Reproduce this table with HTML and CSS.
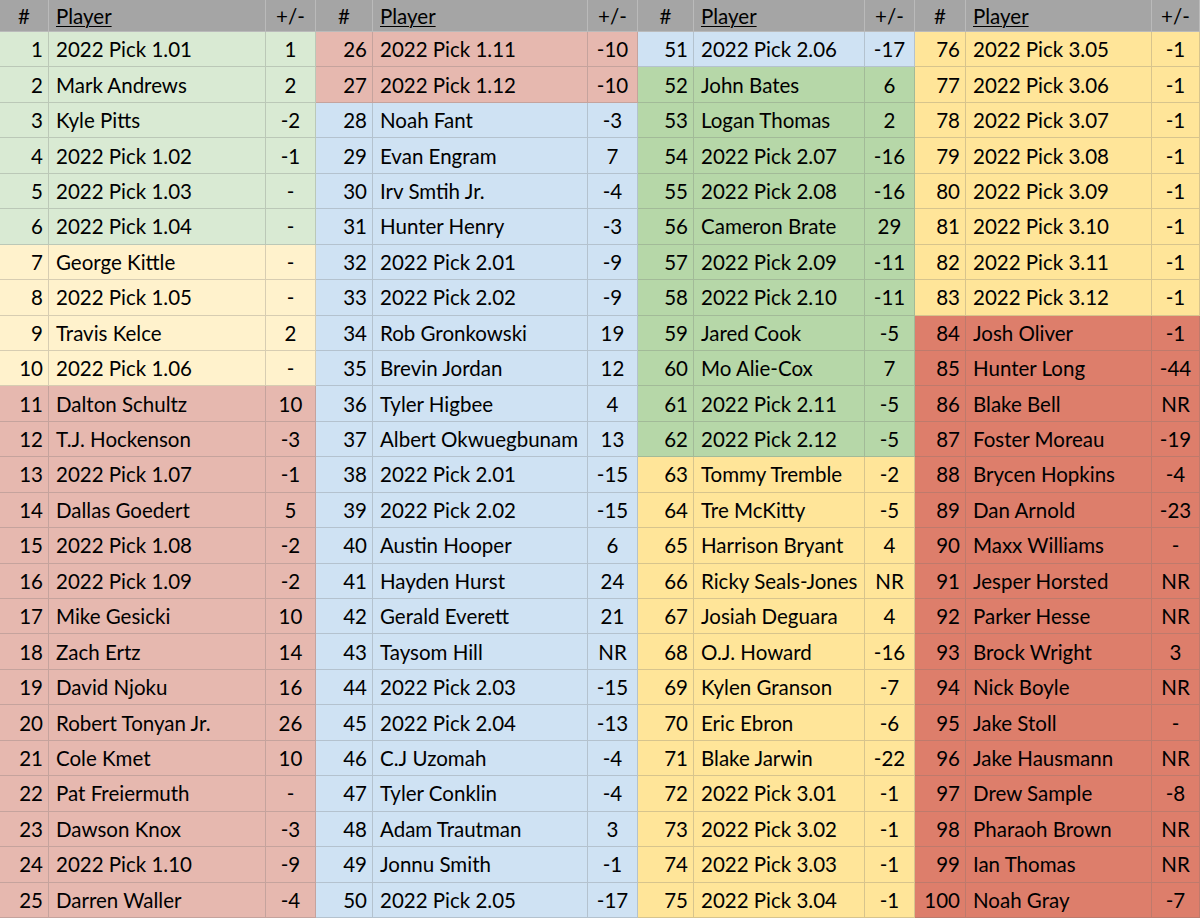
FILE: index.html
```html
<!DOCTYPE html>
<html>
<head>
<meta charset="utf-8">
<link rel="stylesheet" href="styles.css">
</head>
<body>
<div class="sheet">
  <div class="group g1">
    <div class="row head"><div class="c n">#</div><div class="c p">Player</div><div class="c d">+/-</div></div>
    <div class="row lg"><div class="c n">1</div><div class="c p">2022 Pick 1.01</div><div class="c d">1</div></div>
    <div class="row lg"><div class="c n">2</div><div class="c p">Mark Andrews</div><div class="c d">2</div></div>
    <div class="row lg"><div class="c n">3</div><div class="c p">Kyle Pitts</div><div class="c d">-2</div></div>
    <div class="row lg"><div class="c n">4</div><div class="c p">2022 Pick 1.02</div><div class="c d">-1</div></div>
    <div class="row lg"><div class="c n">5</div><div class="c p">2022 Pick 1.03</div><div class="c d">-</div></div>
    <div class="row lg"><div class="c n">6</div><div class="c p">2022 Pick 1.04</div><div class="c d">-</div></div>
    <div class="row ly"><div class="c n">7</div><div class="c p">George Kittle</div><div class="c d">-</div></div>
    <div class="row ly"><div class="c n">8</div><div class="c p">2022 Pick 1.05</div><div class="c d">-</div></div>
    <div class="row ly"><div class="c n">9</div><div class="c p">Travis Kelce</div><div class="c d">2</div></div>
    <div class="row ly"><div class="c n">10</div><div class="c p">2022 Pick 1.06</div><div class="c d">-</div></div>
    <div class="row lr"><div class="c n">11</div><div class="c p">Dalton Schultz</div><div class="c d">10</div></div>
    <div class="row lr"><div class="c n">12</div><div class="c p">T.J. Hockenson</div><div class="c d">-3</div></div>
    <div class="row lr"><div class="c n">13</div><div class="c p">2022 Pick 1.07</div><div class="c d">-1</div></div>
    <div class="row lr"><div class="c n">14</div><div class="c p">Dallas Goedert</div><div class="c d">5</div></div>
    <div class="row lr"><div class="c n">15</div><div class="c p">2022 Pick 1.08</div><div class="c d">-2</div></div>
    <div class="row lr"><div class="c n">16</div><div class="c p">2022 Pick 1.09</div><div class="c d">-2</div></div>
    <div class="row lr"><div class="c n">17</div><div class="c p">Mike Gesicki</div><div class="c d">10</div></div>
    <div class="row lr"><div class="c n">18</div><div class="c p">Zach Ertz</div><div class="c d">14</div></div>
    <div class="row lr"><div class="c n">19</div><div class="c p">David Njoku</div><div class="c d">16</div></div>
    <div class="row lr"><div class="c n">20</div><div class="c p">Robert Tonyan Jr.</div><div class="c d">26</div></div>
    <div class="row lr"><div class="c n">21</div><div class="c p">Cole Kmet</div><div class="c d">10</div></div>
    <div class="row lr"><div class="c n">22</div><div class="c p">Pat Freiermuth</div><div class="c d">-</div></div>
    <div class="row lr"><div class="c n">23</div><div class="c p">Dawson Knox</div><div class="c d">-3</div></div>
    <div class="row lr"><div class="c n">24</div><div class="c p">2022 Pick 1.10</div><div class="c d">-9</div></div>
    <div class="row lr"><div class="c n">25</div><div class="c p">Darren Waller</div><div class="c d">-4</div></div>
  </div>
  <div class="group g2">
    <div class="row head"><div class="c n">#</div><div class="c p">Player</div><div class="c d">+/-</div></div>
    <div class="row lr"><div class="c n">26</div><div class="c p">2022 Pick 1.11</div><div class="c d">-10</div></div>
    <div class="row lr"><div class="c n">27</div><div class="c p">2022 Pick 1.12</div><div class="c d">-10</div></div>
    <div class="row lb"><div class="c n">28</div><div class="c p">Noah Fant</div><div class="c d">-3</div></div>
    <div class="row lb"><div class="c n">29</div><div class="c p">Evan Engram</div><div class="c d">7</div></div>
    <div class="row lb"><div class="c n">30</div><div class="c p">Irv Smtih Jr.</div><div class="c d">-4</div></div>
    <div class="row lb"><div class="c n">31</div><div class="c p">Hunter Henry</div><div class="c d">-3</div></div>
    <div class="row lb"><div class="c n">32</div><div class="c p">2022 Pick 2.01</div><div class="c d">-9</div></div>
    <div class="row lb"><div class="c n">33</div><div class="c p">2022 Pick 2.02</div><div class="c d">-9</div></div>
    <div class="row lb"><div class="c n">34</div><div class="c p">Rob Gronkowski</div><div class="c d">19</div></div>
    <div class="row lb"><div class="c n">35</div><div class="c p">Brevin Jordan</div><div class="c d">12</div></div>
    <div class="row lb"><div class="c n">36</div><div class="c p">Tyler Higbee</div><div class="c d">4</div></div>
    <div class="row lb"><div class="c n">37</div><div class="c p">Albert Okwuegbunam</div><div class="c d">13</div></div>
    <div class="row lb"><div class="c n">38</div><div class="c p">2022 Pick 2.01</div><div class="c d">-15</div></div>
    <div class="row lb"><div class="c n">39</div><div class="c p">2022 Pick 2.02</div><div class="c d">-15</div></div>
    <div class="row lb"><div class="c n">40</div><div class="c p">Austin Hooper</div><div class="c d">6</div></div>
    <div class="row lb"><div class="c n">41</div><div class="c p">Hayden Hurst</div><div class="c d">24</div></div>
    <div class="row lb"><div class="c n">42</div><div class="c p">Gerald Everett</div><div class="c d">21</div></div>
    <div class="row lb"><div class="c n">43</div><div class="c p">Taysom Hill</div><div class="c d">NR</div></div>
    <div class="row lb"><div class="c n">44</div><div class="c p">2022 Pick 2.03</div><div class="c d">-15</div></div>
    <div class="row lb"><div class="c n">45</div><div class="c p">2022 Pick 2.04</div><div class="c d">-13</div></div>
    <div class="row lb"><div class="c n">46</div><div class="c p">C.J Uzomah</div><div class="c d">-4</div></div>
    <div class="row lb"><div class="c n">47</div><div class="c p">Tyler Conklin</div><div class="c d">-4</div></div>
    <div class="row lb"><div class="c n">48</div><div class="c p">Adam Trautman</div><div class="c d">3</div></div>
    <div class="row lb"><div class="c n">49</div><div class="c p">Jonnu Smith</div><div class="c d">-1</div></div>
    <div class="row lb"><div class="c n">50</div><div class="c p">2022 Pick 2.05</div><div class="c d">-17</div></div>
  </div>
  <div class="group g3">
    <div class="row head"><div class="c n">#</div><div class="c p">Player</div><div class="c d">+/-</div></div>
    <div class="row lb"><div class="c n">51</div><div class="c p">2022 Pick 2.06</div><div class="c d">-17</div></div>
    <div class="row gr"><div class="c n">52</div><div class="c p">John Bates</div><div class="c d">6</div></div>
    <div class="row gr"><div class="c n">53</div><div class="c p">Logan Thomas</div><div class="c d">2</div></div>
    <div class="row gr"><div class="c n">54</div><div class="c p">2022 Pick 2.07</div><div class="c d">-16</div></div>
    <div class="row gr"><div class="c n">55</div><div class="c p">2022 Pick 2.08</div><div class="c d">-16</div></div>
    <div class="row gr"><div class="c n">56</div><div class="c p">Cameron Brate</div><div class="c d">29</div></div>
    <div class="row gr"><div class="c n">57</div><div class="c p">2022 Pick 2.09</div><div class="c d">-11</div></div>
    <div class="row gr"><div class="c n">58</div><div class="c p">2022 Pick 2.10</div><div class="c d">-11</div></div>
    <div class="row gr"><div class="c n">59</div><div class="c p">Jared Cook</div><div class="c d">-5</div></div>
    <div class="row gr"><div class="c n">60</div><div class="c p">Mo Alie-Cox</div><div class="c d">7</div></div>
    <div class="row gr"><div class="c n">61</div><div class="c p">2022 Pick 2.11</div><div class="c d">-5</div></div>
    <div class="row gr"><div class="c n">62</div><div class="c p">2022 Pick 2.12</div><div class="c d">-5</div></div>
    <div class="row ye"><div class="c n">63</div><div class="c p">Tommy Tremble</div><div class="c d">-2</div></div>
    <div class="row ye"><div class="c n">64</div><div class="c p">Tre McKitty</div><div class="c d">-5</div></div>
    <div class="row ye"><div class="c n">65</div><div class="c p">Harrison Bryant</div><div class="c d">4</div></div>
    <div class="row ye"><div class="c n">66</div><div class="c p">Ricky Seals-Jones</div><div class="c d">NR</div></div>
    <div class="row ye"><div class="c n">67</div><div class="c p">Josiah Deguara</div><div class="c d">4</div></div>
    <div class="row ye"><div class="c n">68</div><div class="c p">O.J. Howard</div><div class="c d">-16</div></div>
    <div class="row ye"><div class="c n">69</div><div class="c p">Kylen Granson</div><div class="c d">-7</div></div>
    <div class="row ye"><div class="c n">70</div><div class="c p">Eric Ebron</div><div class="c d">-6</div></div>
    <div class="row ye"><div class="c n">71</div><div class="c p">Blake Jarwin</div><div class="c d">-22</div></div>
    <div class="row ye"><div class="c n">72</div><div class="c p">2022 Pick 3.01</div><div class="c d">-1</div></div>
    <div class="row ye"><div class="c n">73</div><div class="c p">2022 Pick 3.02</div><div class="c d">-1</div></div>
    <div class="row ye"><div class="c n">74</div><div class="c p">2022 Pick 3.03</div><div class="c d">-1</div></div>
    <div class="row ye"><div class="c n">75</div><div class="c p">2022 Pick 3.04</div><div class="c d">-1</div></div>
  </div>
  <div class="group g4">
    <div class="row head"><div class="c n">#</div><div class="c p">Player</div><div class="c d">+/-</div></div>
    <div class="row ye"><div class="c n">76</div><div class="c p">2022 Pick 3.05</div><div class="c d">-1</div></div>
    <div class="row ye"><div class="c n">77</div><div class="c p">2022 Pick 3.06</div><div class="c d">-1</div></div>
    <div class="row ye"><div class="c n">78</div><div class="c p">2022 Pick 3.07</div><div class="c d">-1</div></div>
    <div class="row ye"><div class="c n">79</div><div class="c p">2022 Pick 3.08</div><div class="c d">-1</div></div>
    <div class="row ye"><div class="c n">80</div><div class="c p">2022 Pick 3.09</div><div class="c d">-1</div></div>
    <div class="row ye"><div class="c n">81</div><div class="c p">2022 Pick 3.10</div><div class="c d">-1</div></div>
    <div class="row ye"><div class="c n">82</div><div class="c p">2022 Pick 3.11</div><div class="c d">-1</div></div>
    <div class="row ye"><div class="c n">83</div><div class="c p">2022 Pick 3.12</div><div class="c d">-1</div></div>
    <div class="row re"><div class="c n">84</div><div class="c p">Josh Oliver</div><div class="c d">-1</div></div>
    <div class="row re"><div class="c n">85</div><div class="c p">Hunter Long</div><div class="c d">-44</div></div>
    <div class="row re"><div class="c n">86</div><div class="c p">Blake Bell</div><div class="c d">NR</div></div>
    <div class="row re"><div class="c n">87</div><div class="c p">Foster Moreau</div><div class="c d">-19</div></div>
    <div class="row re"><div class="c n">88</div><div class="c p">Brycen Hopkins</div><div class="c d">-4</div></div>
    <div class="row re"><div class="c n">89</div><div class="c p">Dan Arnold</div><div class="c d">-23</div></div>
    <div class="row re"><div class="c n">90</div><div class="c p">Maxx Williams</div><div class="c d">-</div></div>
    <div class="row re"><div class="c n">91</div><div class="c p">Jesper Horsted</div><div class="c d">NR</div></div>
    <div class="row re"><div class="c n">92</div><div class="c p">Parker Hesse</div><div class="c d">NR</div></div>
    <div class="row re"><div class="c n">93</div><div class="c p">Brock Wright</div><div class="c d">3</div></div>
    <div class="row re"><div class="c n">94</div><div class="c p">Nick Boyle</div><div class="c d">NR</div></div>
    <div class="row re"><div class="c n">95</div><div class="c p">Jake Stoll</div><div class="c d">-</div></div>
    <div class="row re"><div class="c n">96</div><div class="c p">Jake Hausmann</div><div class="c d">NR</div></div>
    <div class="row re"><div class="c n">97</div><div class="c p">Drew Sample</div><div class="c d">-8</div></div>
    <div class="row re"><div class="c n">98</div><div class="c p">Pharaoh Brown</div><div class="c d">NR</div></div>
    <div class="row re"><div class="c n">99</div><div class="c p">Ian Thomas</div><div class="c d">NR</div></div>
    <div class="row re"><div class="c n">100</div><div class="c p">Noah Gray</div><div class="c d">-7</div></div>
  </div>
</div>
</body>
</html>
```
FILE: styles.css
```css
* { box-sizing: border-box; }
html, body { margin: 0; padding: 0; }
body {
  font-family: "Lato", "Liberation Sans", sans-serif;
  font-size: 20.5px;
  color: #000;
  background: #fff;
}
.sheet {
  display: flex;
  width: 1200px;
  height: 918px;
  overflow: hidden;
}
.group {
  display: flex;
  flex-direction: column;
}
.g1 { width: 316px; --cols: 49px 217px 50px; }
.g2 { width: 322px; --cols: 57px 215px 50px; }
.g3 { width: 277px; --cols: 56px 171px 50px; }
.g4 { width: 285px; --cols: 51px 186px 48px; }
.row {
  display: grid;
  grid-template-columns: var(--cols);
  flex: 1 1 0;
  min-height: 0;
}
.row.head {
  flex: 0 0 32px;
  background: #a5a5a5;
}
.c {
  display: flex;
  align-items: center;
  border-right: 1px solid rgba(110, 110, 110, 0.28);
  border-bottom: 1px solid rgba(110, 110, 110, 0.28);
  white-space: nowrap;
  overflow: hidden;
}
.head .c { border-color: rgba(200, 200, 200, 0.6); }
.n { justify-content: flex-end; padding-right: 5px; }
.p { padding-left: 7px; }
.d { justify-content: center; }
.head .n, .head .d { justify-content: center; padding-right: 0; }
.head .p { text-decoration: underline; text-underline-offset: 2px; text-decoration-thickness: 1px; }
.lg { background: #d9ead3; }
.ly { background: #fff2cc; }
.lr { background: #e6b8af; }
.lb { background: #cfe2f3; }
.gr { background: #b6d7a8; }
.ye { background: #ffe599; }
.re { background: #dd7e6b; }
```
